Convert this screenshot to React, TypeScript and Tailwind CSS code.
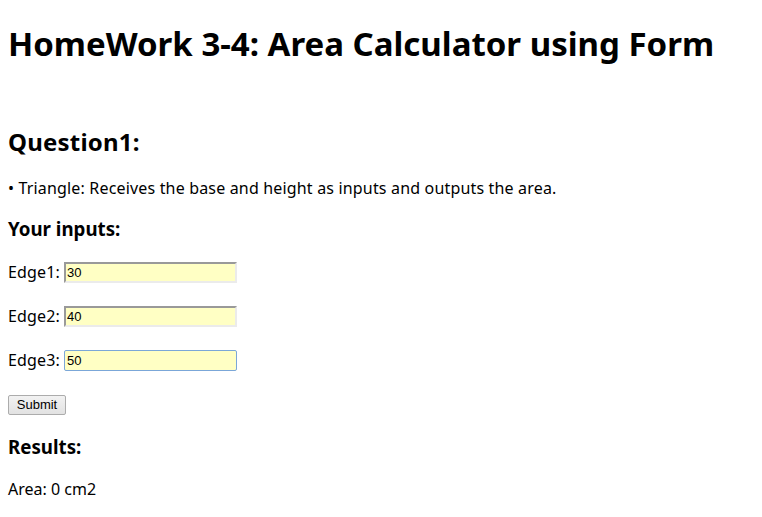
export default function App() {
  const edges = [
    { label: "Edge1:", value: "30", focused: false },
    { label: "Edge2:", value: "40", focused: false },
    { label: "Edge3:", value: "50", focused: true },
  ];

  return (
    <div
      className="min-h-screen bg-white px-2 text-black"
      style={{ fontFamily: '"Noto Sans", "Open Sans", sans-serif' }}
    >
      <h1 className="pt-[24px] text-[33px] font-bold leading-[40px]">
        HomeWork 3-4: Area Calculator using Form
      </h1>

      <h2 className="mt-[62px] text-[24px] font-bold leading-[32px] tracking-[0.2px]">
        Question1:
      </h2>

      <p className="mt-[18px] text-[16px] leading-[24px] tracking-[0.17px]">
        • Triangle: Receives the base and height as inputs and outputs the area.
      </p>

      <h3 className="mt-[16px] text-[18.72px] font-bold leading-[26px]">
        Your inputs:
      </h3>

      <form className="flex flex-col" onSubmit={(e) => e.preventDefault()}>
        {edges.map((edge, i) => (
          <div
            key={edge.label}
            className={`flex h-[24px] items-center ${i === 0 ? "mt-[18px]" : "mt-[20px]"}`}
          >
            <span className="text-[16px] leading-[24px] tracking-[0.15px]">{edge.label}</span>
            <input
              type="text"
              defaultValue={edge.value}
              className={
                edge.focused
                  ? "ml-[4px] h-[21px] w-[173px] rounded-[2px] border border-[#7ba7d8] bg-[#ffffc4] px-[2px] text-[13px] outline-none"
                  : "ml-[4px] h-[21px] w-[173px] border-2 border-t-[#999999] border-l-[#9a9a9a] border-r-[#ebebeb] border-b-[#ebebeb] bg-[#ffffc4] px-[1px] text-[13px] outline-none"
              }
              style={{ fontFamily: '"Liberation Sans", Arial, sans-serif' }}
            />
          </div>
        ))}

        <div className="mt-[23px] flex">
          <button
            type="submit"
            className="h-[20px] w-[58px] rounded-[2px] border border-[#acacac] bg-gradient-to-b from-[#f2f2f2] to-[#e2e2e2] text-[13px] leading-[18px]"
            style={{ fontFamily: '"Liberation Sans", Arial, sans-serif' }}
          >
            Submit
          </button>
        </div>
      </form>

      <h3 className="mt-[19px] text-[18.72px] font-bold leading-[26px]">
        Results:
      </h3>

      <p className="mt-[17px] text-[16px] leading-[24px]">Area: 0 cm2</p>
    </div>
  );
}
